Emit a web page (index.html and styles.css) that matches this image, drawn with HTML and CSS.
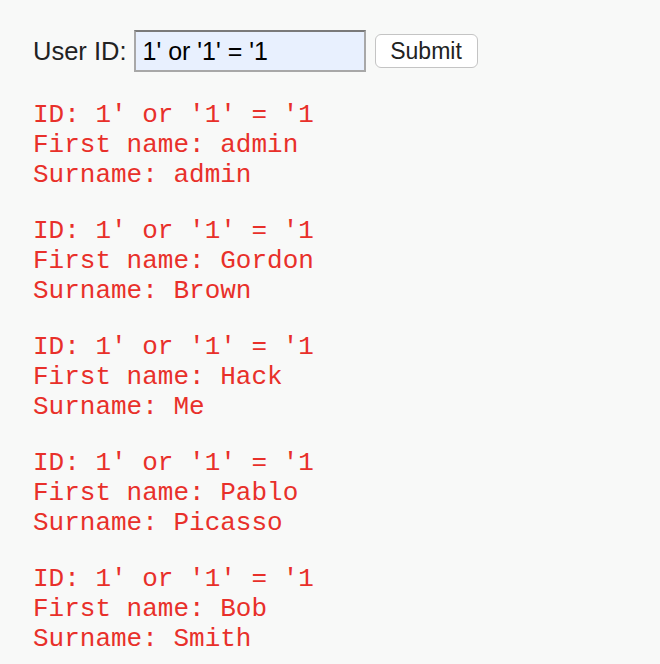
FILE: index.html
```html
<!DOCTYPE html>
<html>
<head>
<meta charset="utf-8">
<link rel="stylesheet" href="styles.css">
</head>
<body>
<form class="query">
  <label class="label" for="uid">User ID:</label>
  <input class="field" id="uid" type="text" value="1' or '1' = '1">
  <button class="submit" type="button">Submit</button>
</form>
<div class="results">
<pre class="rec">ID: 1' or '1' = '1
First name: admin
Surname: admin</pre>
<pre class="rec">ID: 1' or '1' = '1
First name: Gordon
Surname: Brown</pre>
<pre class="rec">ID: 1' or '1' = '1
First name: Hack
Surname: Me</pre>
<pre class="rec">ID: 1' or '1' = '1
First name: Pablo
Surname: Picasso</pre>
<pre class="rec">ID: 1' or '1' = '1
First name: Bob
Surname: Smith</pre>
</div>
</body>
</html>
```
FILE: styles.css
```css
html, body {
  margin: 0;
  background: #f8f9f8;
}
body {
  padding: 30px 0 0 33px;
  font-family: "Liberation Sans", Arial, sans-serif;
  color: #222;
}
.query {
  display: flex;
  align-items: center;
  margin: 0;
  height: 42px;
}
.label {
  font-size: 25.5px;
  margin-right: 7px;
}
.field {
  box-sizing: border-box;
  width: 232px;
  height: 42px;
  margin: 0;
  padding: 0 0 0 7px;
  border: 2px solid #a8a8a8;
  border-top-color: #7a7a7a;
  background: #e8f0fe;
  font-family: "Liberation Sans", Arial, sans-serif;
  font-size: 25px;
  color: #000;
  outline: none;
}
.submit {
  box-sizing: border-box;
  width: 103px;
  height: 34px;
  margin: 0 0 0 9px;
  padding: 0;
  border: 1px solid #c4c4c4;
  border-radius: 6px;
  background: #fff;
  font-family: "Liberation Sans", Arial, sans-serif;
  font-size: 23px;
  color: #222;
}
.results {
  display: flex;
  flex-direction: column;
  gap: 26px;
  margin-top: 28px;
}
.rec {
  margin: 0;
  font-family: "Courier New", Courier, "Nimbus Mono PS", "Nimbus Mono L", FreeMono, "Liberation Mono", monospace;
  font-size: 26px;
  line-height: 30px;
  color: #e8302a;
}
```
